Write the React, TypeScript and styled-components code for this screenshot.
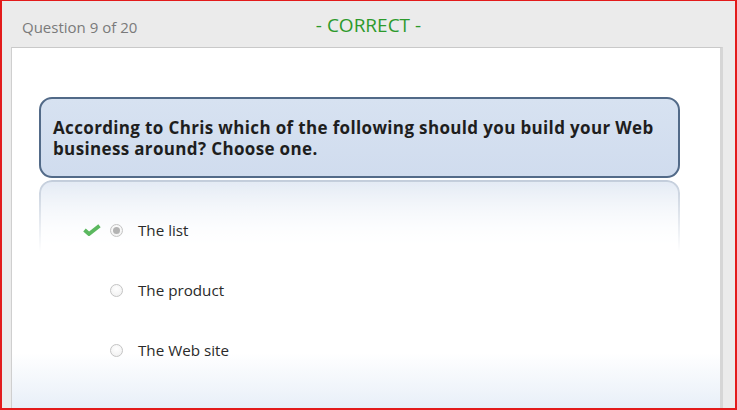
import React from "react";
import styled, { createGlobalStyle } from "styled-components";

const Global = createGlobalStyle`
  html, body { margin: 0; padding: 0; background: #ebebeb; }
  #root { width: 737px; height: 410px; overflow: hidden; }
  *, *::before, *::after { box-sizing: border-box; }
`;

const Frame = styled.div`
  width: 737px;
  height: 410px;
  display: flex;
  flex-direction: column;
  background: #ebebeb;
  border: 2px solid #e31b1b;
  border-top-width: 1px;
  font-family: "Open Sans", "Noto Sans", sans-serif;
  overflow: hidden;
`;

const Header = styled.div`
  height: 46px;
  flex: none;
  display: grid;
  grid-template-columns: 1fr auto 1fr;
  align-items: center;
  padding: 0 20px 0 20px;
`;

const Counter = styled.span`
  font-size: 15px;
  color: #7a7a7a;
  padding-top: 6px;
`;

const Status = styled.span`
  font-size: 19px;
  color: #2c9a2c;
  padding-top: 2px;
`;

const Panel = styled.div`
  flex: 1;
  margin: 0 12px 0 9px;
  background: linear-gradient(to bottom, #ffffff 0, #ffffff 305px, #e8eff8 100%);
  border-top: 1px solid #c9c9c9;
  border-left: 1px solid #cfcfcf;
  border-right: 3px solid #d6d6d6;
  padding: 49px 0 0 27px;
  display: flex;
  flex-direction: column;
`;

const QuestionBox = styled.div`
  width: 641px;
  height: 81px;
  border: 2px solid #526a88;
  border-radius: 13px;
  background: linear-gradient(to bottom, #d7e2f1, #d0dcee);
  padding: 18px 10px 0 12px;
  font-size: 17px;
  letter-spacing: 0.35px;
  font-weight: 700;
  line-height: 21px;
  color: #1e1e1e;
`;

const OptionList = styled.div`
  position: relative;
  width: 641px;
  margin-top: 2px;
  padding-top: 20px;
  display: flex;
  flex-direction: column;

  &::before {
    content: "";
    position: absolute;
    left: 0;
    top: 0;
    width: 641px;
    height: 72px;
    border: 2px solid #c3cddb;
    border-bottom: none;
    border-radius: 13px 13px 0 0;
    background: linear-gradient(to bottom, #e3eaf4, #ffffff);
    -webkit-mask-image: linear-gradient(to bottom, #000 0%, rgba(0,0,0,0.45) 55%, transparent 100%);
    mask-image: linear-gradient(to bottom, #000 0%, rgba(0,0,0,0.45) 55%, transparent 100%);
  }
`;

const Option = styled.div`
  position: relative;
  height: 60px;
  display: grid;
  grid-template-columns: 18px 13px auto;
  column-gap: 8px;
  align-items: center;
  padding-left: 44px;

  & > :nth-child(2) {
    margin-left: 1px;
  }

  & > :nth-child(3) {
    margin-left: 8px;
  }
`;

const Label = styled.span`
  font-size: 15.2px;
  color: #2a2a2a;
`;

const Radio = styled.span<{ $checked?: boolean }>`
  width: 13px;
  height: 13px;
  border-radius: 50%;
  border: 1px solid #c4c4c4;
  background: radial-gradient(circle at 50% 35%, #ffffff 0%, #eeeeee 100%);
  display: flex;
  align-items: center;
  justify-content: center;

  &::after {
    content: "";
    width: 7px;
    height: 7px;
    border-radius: 50%;
    background: ${(p) => (p.$checked ? "#b3b3b3" : "transparent")};
  }
`;

const CheckSlot = styled.span`
  width: 18px;
  height: 13px;
  display: flex;
  align-items: center;
`;

const Check = () => (
  <svg width="18" height="12" viewBox="0 0 18 12">
    <path
      d="M1.5 6 L6 10 L16.5 1.8"
      fill="none"
      stroke="#5bb85f"
      strokeWidth="3.8"
      strokeLinecap="butt"
      strokeLinejoin="miter"
    />
  </svg>
);

const options = [
  { text: "The list", correct: true, checked: true },
  { text: "The product", correct: false, checked: false },
  { text: "The Web site", correct: false, checked: false },
];

export default function App() {
  return (
    <>
      <Global />
      <Frame>
        <Header>
          <Counter>Question 9 of 20</Counter>
          <Status>- CORRECT -</Status>
          <span />
        </Header>
        <Panel>
          <QuestionBox>
            According to Chris which of the following should you build your Web business around? Choose one.
          </QuestionBox>
          <OptionList>
            {options.map((o) => (
              <Option key={o.text}>
                <CheckSlot>{o.correct ? <Check /> : null}</CheckSlot>
                <Radio $checked={o.checked} />
                <Label>{o.text}</Label>
              </Option>
            ))}
          </OptionList>
        </Panel>
      </Frame>
    </>
  );
}
